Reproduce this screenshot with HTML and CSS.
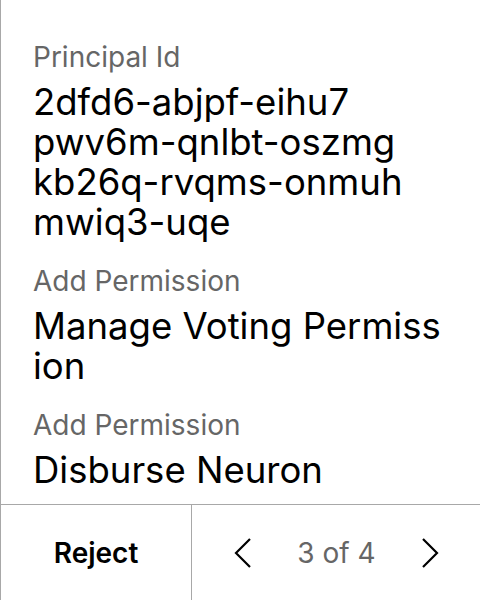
FILE: index.html
```html
<!DOCTYPE html>
<html>
<head>
<meta charset="utf-8">
<link rel="stylesheet" href="styles.css">
</head>
<body>
<div class="screen">
  <div class="content">
    <div class="field">
      <div class="label">Principal Id</div>
      <div class="value">
        <span class="line">2dfd6-abjpf-eihu7</span>
        <span class="line">pwv6m-qnlbt-oszmg</span>
        <span class="line">kb26q-rvqms-onmuh</span>
        <span class="line">mwiq3-uqe</span>
      </div>
    </div>
    <div class="field">
      <div class="label">Add Permission</div>
      <div class="value">
        <span class="line">Manage Voting Permiss</span>
        <span class="line">ion</span>
      </div>
    </div>
    <div class="field">
      <div class="label">Add Permission</div>
      <div class="value">
        <span class="line">Disburse Neuron</span>
      </div>
    </div>
  </div>
  <div class="footer">
    <div class="reject">Reject</div>
    <div class="nav">
      <svg class="chev" width="18" height="32" viewBox="0 0 18 32"><path d="M16 2 L2 16 L16 30" fill="none" stroke="#000" stroke-width="2.2"/></svg>
      <span class="pager">3 of 4</span>
      <svg class="chev" width="18" height="32" viewBox="0 0 18 32"><path d="M2 2 L16 16 L2 30" fill="none" stroke="#000" stroke-width="2.2"/></svg>
    </div>
  </div>
</div>
</body>
</html>
```

FILE: styles.css
```css
* { box-sizing: border-box; }
html, body { margin: 0; padding: 0; background: #fff; }
body { font-family: Inter, "Noto Sans", sans-serif; }
.screen {
  width: 480px;
  height: 600px;
  border-left: 1px solid #a8a8a8;
  display: flex;
  flex-direction: column;
}
.content {
  flex: 1;
  padding: 39px 0 0 32px;
  display: flex;
  flex-direction: column;
  gap: 21px;
}
.label {
  font-size: 28px;
  line-height: 36px;
  color: #666;
}
.value {
  font-size: 36.5px;
  line-height: 40px;
  color: #000;
  margin-top: 7px;
}
.line { display: block; }
.footer {
  height: 96px;
  flex: none;
  border-top: 1px solid #a8a8a8;
  display: flex;
}
.reject {
  width: 191px;
  border-right: 1px solid #a8a8a8;
  display: flex;
  align-items: center;
  justify-content: center;
  font-size: 28px;
  font-weight: 600;
  color: #000;
}
.nav {
  flex: 1;
  display: flex;
  align-items: center;
  justify-content: space-between;
  padding: 0 41px 0 42px;
}
.pager {
  font-size: 28px;
  color: #666;
}
```
